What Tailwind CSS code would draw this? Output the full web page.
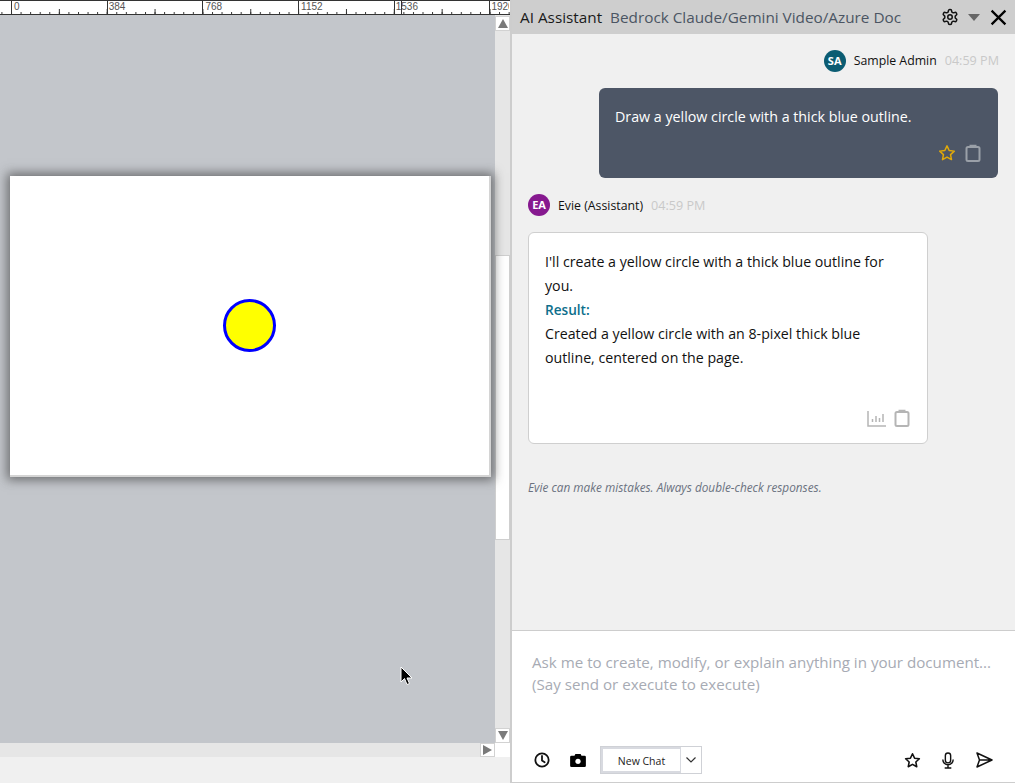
<!DOCTYPE html>
<html lang="en">
<head>
  <meta charset="UTF-8" />
  <title>AI Assistant</title>
  <script src="https://cdn.jsdelivr.net/npm/@tailwindcss/browser@4"></script>
</head>
<body class="w-[1015px] h-[783px] overflow-hidden flex bg-[#f0f0f0] font-['Open_Sans','Noto_Sans',sans-serif]">

<!-- Editor side -->
<div class="w-[510px] h-full flex flex-col shrink-0">
  <!-- Ruler -->
  <div class="relative h-[15px] bg-white border-t border-b border-[#333] overflow-hidden shrink-0 flex pl-[11px] text-[10px] leading-[12px] text-[#555] font-['Liberation_Sans',sans-serif]">
    <svg class="absolute left-0 top-0" width="510" height="13" fill="none" stroke="#333" stroke-width="1">
      <defs>
        <pattern id="ticks" x="11" y="0" width="9.57" height="13" patternUnits="userSpaceOnUse"><path d="M.5 11v2"/></pattern>
        <pattern id="mids" x="11" y="0" width="47.85" height="13" patternUnits="userSpaceOnUse"><path d="M.5 8v5"/></pattern>
      </defs>
      <rect width="510" height="13" fill="url(#ticks)" stroke="none"/>
      <rect width="510" height="13" fill="url(#mids)" stroke="none"/>
      <path d="M401.5 0v13"/>
    </svg>
    <div class="w-[95.7px] shrink-0 border-l border-[#333] pl-[2px]">0</div>
    <div class="w-[95.7px] shrink-0 border-l border-[#333] pl-[1px]">384</div>
    <div class="w-[95.7px] shrink-0 border-l border-[#333] pl-[2px]">768</div>
    <div class="w-[95.7px] shrink-0 border-l border-[#333] pl-[2px]">1152</div>
    <div class="w-[95.7px] shrink-0 border-l border-[#333] pl-[1px]">1536</div>
    <div class="w-[20px] shrink-0 border-l border-[#333] pl-[1px] whitespace-nowrap overflow-hidden">1920</div>
  </div>

  <div class="flex h-[728px] shrink-0">
    <!-- Canvas -->
    <div class="relative w-[495px] bg-[#c3c6cb] pt-[161px] pl-[10px]">
      <div class="w-[481px] h-[301px] bg-white border-r-2 border-b-2 border-[#d4d4d4] shadow-[0_0_10px_3px_rgba(50,50,50,0.6)] flex items-center justify-center">
        <div class="w-[53px] h-[53px] rounded-full bg-[#ffff00] border-[3px] border-[#0000ff] mt-[-1px]"></div>
      </div>
      <svg class="absolute left-[400px] top-[651px]" width="14" height="20" viewBox="0 0 14 20"><path d="M1 1v15l3.500-3.500 2.500 6 2.500-1-2.500-5.500h5z" fill="#000" stroke="#fff" stroke-width="1"/></svg>
    </div>
    <!-- Vertical scrollbar -->
    <div class="w-[15px] flex flex-col bg-[#e6e6e6]">
      <div class="h-[15px] bg-white border border-[#d2d2d2] mt-[1px] flex items-center justify-center shrink-0">
        <div class="w-0 h-0 border-x-[5px] border-x-transparent border-b-[9px] border-b-[#7a7a7a]"></div>
      </div>
      <div class="h-[224px] shrink-0"></div>
      <div class="h-[285px] bg-white border border-[#cfcfcf] shrink-0"></div>
      <div class="flex-1"></div>
      <div class="h-[15px] bg-white border border-[#d2d2d2] flex items-center justify-center shrink-0">
        <div class="w-0 h-0 border-x-[5px] border-x-transparent border-t-[9px] border-t-[#7a7a7a]"></div>
      </div>
    </div>
  </div>

  <!-- Horizontal scrollbar -->
  <div class="flex h-[14px] shrink-0">
    <div class="w-[480px] bg-[#e6e6e6]"></div>
    <div class="w-[15px] bg-white border border-[#d2d2d2] flex items-center justify-center">
      <div class="w-0 h-0 border-y-[5px] border-y-transparent border-l-[9px] border-l-[#7a7a7a]"></div>
    </div>
    <div class="w-[15px] bg-white"></div>
  </div>
  <div class="flex-1 bg-[#f0f0f0]"></div>
</div>

<!-- Assistant panel -->
<div class="w-[505px] h-full flex flex-col border-l-2 border-[#cdcdcd]">
  <header class="h-[34px] bg-[#cecece] flex items-center pl-[8px] pr-[8px] shrink-0">
    <span class="text-[15.3px] text-[#1a1a1a]">AI Assistant</span>
    <span class="text-[15.3px] text-[#4b5563] ml-[8px] whitespace-nowrap">Bedrock Claude/Gemini Video/Azure Doc</span>
    <svg class="ml-auto" width="18" height="18" viewBox="0 0 24 24" fill="none" stroke="#111" stroke-width="2" stroke-linecap="round" stroke-linejoin="round"><path d="M12.220 2h-.44a2 2 0 0 0-2 2v.18a2 2 0 0 1-1 1.730l-.43.25a2 2 0 0 1-2 0l-.15-.08a2 2 0 0 0-2.730.73l-.22.38a2 2 0 0 0 .73 2.730l.15.1a2 2 0 0 1 1 1.720v.51a2 2 0 0 1-1 1.740l-.15.09a2 2 0 0 0-.73 2.730l.22.38a2 2 0 0 0 2.730.73l.15-.08a2 2 0 0 1 2 0l.43.25a2 2 0 0 1 1 1.730V20a2 2 0 0 0 2 2h.44a2 2 0 0 0 2-2v-.18a2 2 0 0 1 1-1.730l.43-.25a2 2 0 0 1 2 0l.15.08a2 2 0 0 0 2.730-.73l.22-.39a2 2 0 0 0-.73-2.730l-.15-.08a2 2 0 0 1-1-1.740v-.5a2 2 0 0 1 1-1.740l.15-.09a2 2 0 0 0 .73-2.730l-.22-.38a2 2 0 0 0-2.730-.73l-.15.08a2 2 0 0 1-2 0l-.43-.25a2 2 0 0 1-1-1.730V4a2 2 0 0 0-2-2z"/><circle cx="12" cy="12" r="3"/></svg>
    <div class="w-0 h-0 ml-[9px] mr-[1px] border-x-[6px] border-x-transparent border-t-[7px] border-t-[#666]"></div>
    <svg class="ml-[9px]" width="17" height="17" viewBox="0 0 16 16" fill="none" stroke="#000" stroke-width="2.100"><path d="M1.500 1.500l13 13M14.500 1.500l-13 13"/></svg>
  </header>

  <main class="flex-1 bg-[#f0f0f0] px-[16px] pt-[16px]">
    <!-- User message -->
    <div class="flex items-center justify-end h-[22px] text-[12.300px]">
      <div class="w-[22px] h-[22px] rounded-full bg-[#0b5c72] text-white text-[11px] font-bold flex items-center justify-center">SA</div>
      <span class="ml-[8px] text-[#111] pt-[1px]">Sample Admin</span>
      <span class="ml-[8px] text-[#c9c9c9] text-[12.600px] pt-[1px]">04:59 PM</span>
    </div>
    <div class="ml-[71px] mt-[16px] w-[399px] h-[90px] rounded-[6px] bg-[#4d5666] px-[16px] pt-[17px] relative">
      <p class="text-[14.250px] leading-[24px] text-white">Draw a yellow circle with a thick blue outline.</p>
      <div class="absolute right-[17px] bottom-[16px] flex items-center gap-[9px]">
        <svg width="18" height="18" viewBox="0 0 24 24" fill="none" stroke="#e0a90a" stroke-width="2" stroke-linejoin="round"><path d="M12 2.500l2.900 6.200 6.800.8-5 4.600 1.300 6.700-6-3.300-6 3.300 1.300-6.700-5-4.600 6.800-.8z"/></svg>
        <svg width="16" height="18" viewBox="0 0 16 18" fill="none" stroke="#9aa0a8" stroke-width="2"><rect x="1.500" y="3" width="13" height="14" rx="1.500"/><path d="M5.500 3V1.800h5V3"/></svg>
      </div>
    </div>

    <!-- Assistant message -->
    <div class="flex items-center h-[22px] mt-[16px] text-[12.300px]">
      <div class="w-[22px] h-[22px] rounded-full bg-[#86198f] text-white text-[11px] font-bold flex items-center justify-center">EA</div>
      <span class="ml-[8px] text-[#111] pt-[2px]">Evie (Assistant)</span>
      <span class="ml-[8px] text-[#c9c9c9] text-[12.600px] pt-[2px]">04:59 PM</span>
    </div>
    <div class="mt-[16px] w-[400px] h-[212px] rounded-[6px] bg-white border border-[#cfcfcf] px-[16px] pt-[17px] relative text-[14.200px] leading-[24px] text-[#111]">
      <p class="max-w-[350px]">I'll create a yellow circle with a thick blue outline for you.</p>
      <p class="text-[#0e6f8c] font-semibold text-[13.600px]">Result:</p>
      <p class="max-w-[350px]">Created a yellow circle with an 8-pixel thick blue outline, centered on the page.</p>
      <div class="absolute right-[17px] bottom-[16px] flex items-center gap-[8px]">
        <svg width="19" height="17" viewBox="0 0 19 17" fill="none" stroke="#b5b5b5" stroke-width="1.500"><path d="M1 1v15h18"/><path d="M5.500 12v-3M9 12V6M12.500 12V8M16 12V4"/></svg>
        <svg width="16" height="18" viewBox="0 0 16 18" fill="none" stroke="#b5b5b5" stroke-width="2"><rect x="1.500" y="3" width="13" height="14" rx="1.500"/><path d="M5.500 3V1.800h5V3"/></svg>
      </div>
    </div>

    <p class="mt-[35px] text-[11.800px] italic text-[#6b7280]">Evie can make mistakes. Always double-check responses.</p>
  </main>

  <!-- Input -->
  <footer class="h-[153px] shrink-0 bg-white border-t border-b border-[#cdcdcd] flex flex-col pl-[20px] pr-[22px] pt-[20px]">
    <p class="text-[15.150px] leading-[22px] text-[#a7abb4] whitespace-nowrap">Ask me to create, modify, or explain anything in your document...<br>(Say send or execute to execute)</p>
    <div class="mt-auto mb-[8px] flex items-center">
      <svg class="ml-[2px]" width="16" height="16" viewBox="0 0 18 18" fill="none" stroke="#111" stroke-width="2" stroke-linecap="round"><circle cx="9" cy="9" r="7.500"/><path d="M9 4.500V9.500l3 2"/></svg>
      <svg class="ml-[20px]" width="16" height="14" viewBox="0 0 18 16"><path d="M1.500 3H5l1-2h6l1 2h3.500A1.500 1.500 0 0 1 18 4.500v10a1.500 1.500 0 0 1-1.500 1.500h-15A1.500 1.500 0 0 1 0 14.500v-10A1.500 1.500 0 0 1 1.500 3z" fill="#000"/><circle cx="9" cy="9.500" r="3" fill="#fff"/></svg>
      <div class="ml-[14px] flex h-[28px] border border-[#cfd1d6]">
        <div class="w-[80px] border-2 border-[#d8dae0] border-r-[1px] pt-[3px] flex items-center justify-center text-[10.500px] text-[#222]">New Chat</div>
        <div class="w-[20px] flex items-center justify-center">
          <svg width="12" height="8" viewBox="0 0 12 8" fill="none" stroke="#333" stroke-width="1.200"><path d="M1.500 1.500L6 6l4.500-4.500"/></svg>
        </div>
      </div>
      <svg class="ml-auto" width="17" height="17" viewBox="0 0 24 24" fill="none" stroke="#111" stroke-width="2.200" stroke-linejoin="round"><path d="M12 2.500l2.900 6.200 6.800.8-5 4.600 1.300 6.700-6-3.300-6 3.300 1.300-6.700-5-4.600 6.800-.8z"/></svg>
      <svg class="ml-[20px]" width="14" height="17" viewBox="0 0 14 18" fill="none" stroke="#111" stroke-width="1.500"><rect x="4.200" y="1" width="5.600" height="10.500" rx="2.800"/><path d="M1.500 8a5.500 5.500 0 0 0 11 0M7 13.500V17M3.500 17h7"/></svg>
      <svg class="ml-[21px]" width="17" height="16" viewBox="0 0 17 16" fill="none" stroke="#111" stroke-width="1.500" stroke-linejoin="round"><path d="M1 1l15 7-15 7 2.500-7zM3.500 8H16"/></svg>
    </div>
  </footer>
</div>
</body>
</html>
